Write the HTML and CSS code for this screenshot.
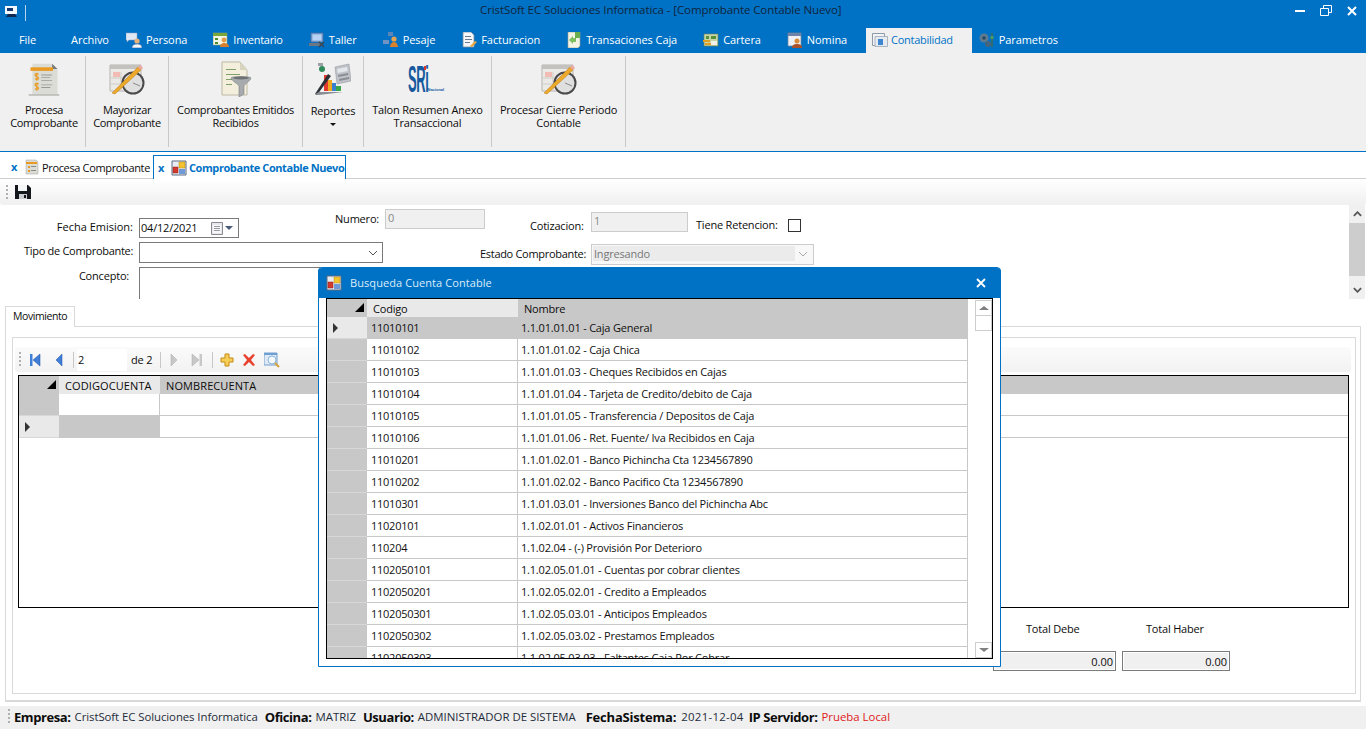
FILE: index.html
```html
<!DOCTYPE html>
<html lang="es">
<head>
<meta charset="utf-8">
<title>CristSoft EC Soluciones Informatica</title>
<link rel="stylesheet" href="styles.css">
</head>
<body>
<svg class="sprite" aria-hidden="true">
  <symbol id="i-app" viewBox="0 0 16 16"><path d="M2 2h12v8H2z" fill="#f4f8ff"/><path d="M4 4h6v3H4z" fill="#16366e"/><path d="M5 10h7l2 3H3z" fill="#12284f"/></symbol>
  <symbol id="i-persona" viewBox="0 0 16 16"><path d="M0 1h11v7H3L1 10V8H0z" fill="#dfe7f4" stroke="#8aa0c0" stroke-width=".5"/><circle cx="11" cy="9" r="2.600" fill="#e8b27c"/><path d="M6 16c0-3 2-4 5-4s5 1 5 4z" fill="#f4f6fa" stroke="#4c78b0" stroke-width=".7"/></symbol>
  <symbol id="i-inv" viewBox="0 0 16 16"><path d="M0 1h14v12H0z" fill="#f1f6e6" stroke="#8a9a70" stroke-width=".6"/><path d="M0 1h14v3H0z" fill="#7aa53a"/><path d="M2 6h3v2H2zM2 10h3v2H2z" fill="#4f8a2c"/><circle cx="11" cy="8" r="2.400" fill="#e59b45"/><path d="M7 15c0-3 2-4 4-4s5 1 5 4z" fill="#d97f2b"/></symbol>
  <symbol id="i-taller" viewBox="0 0 16 16"><path d="M2 1h12v9H2z" fill="#7fa5d8" stroke="#4a6a98" stroke-width=".7"/><path d="M3.500 2.500h9v6h-9z" fill="#b7d2f2"/><path d="M0 11h13v3H0z" fill="#6d7683"/><path d="M10 10l5 5M15 10l-5 5" stroke="#39424f" stroke-width="1.300"/></symbol>
  <symbol id="i-pesaje" viewBox="0 0 16 16"><path d="M5 0h5v4H5z" fill="#5d84b9"/><path d="M0 8h6v4H0z" fill="#6f94c4"/><circle cx="11" cy="7" r="2.600" fill="#e7a24f"/><path d="M7 15c0-3 2-5 4-5s4 2 4 5z" fill="#d9812c"/></symbol>
  <symbol id="i-fact" viewBox="0 0 16 16"><path d="M2 0h8l3 3v12H2z" fill="#f5f7fb" stroke="#7a8aa0" stroke-width=".8"/><path d="M4 4h6v1H4zM4 7h7v1H4zM4 10h5v1H4z" fill="#6a7a90"/><path d="M9 14l5-5 2 1-5 5z" fill="#e7a93c"/></symbol>
  <symbol id="i-caja" viewBox="0 0 16 16"><path d="M2 0h12v14l-2 2H2z" fill="#f3f4e6" stroke="#9aa08a" stroke-width=".6"/><path d="M9 0h5v6H9z" fill="#69b04c"/><path d="M3 8l4-4v2h3v4H7v2z" fill="#7ec060"/></symbol>
  <symbol id="i-cartera" viewBox="0 0 16 16"><path d="M1 2h14v12H1z" fill="#c6d6a8" stroke="#6f7f52" stroke-width=".6"/><path d="M3 4h3v3H3zM8 4h5v3H8z" fill="#5a8f3a"/><path d="M8 9h6v4H8z" fill="#f1f1ea"/><path d="M0 8h7v2H0zM2 11h6v2H2z" fill="#e2a023"/></symbol>
  <symbol id="i-nomina" viewBox="0 0 16 16"><path d="M1 1h13v13H1z" fill="#eef0f6" stroke="#7a8294" stroke-width=".7"/><path d="M1 1h13v3H1z" fill="#6f83a8"/><circle cx="10" cy="9" r="2.500" fill="#d98b3a"/><path d="M5 16c0-3 2-4 5-4s5 1 5 4z" fill="#a8512a"/></symbol>
  <symbol id="i-conta" viewBox="0 0 16 16"><path d="M.5 1.500h12v12H.5z" fill="#f2f4f7" stroke="#8f98a6"/><path d="M3 4.500h12.500v10H3z" fill="#e6ebf2" stroke="#9aa4b3" stroke-width=".8"/><path d="M6 7h5v6H6z" fill="#3f86d0"/></symbol>
  <symbol id="i-param" viewBox="0 0 16 16"><circle cx="5" cy="6" r="4.500" fill="#5f7b92"/><circle cx="5" cy="6" r="1.800" fill="#2d485e"/><circle cx="9" cy="12" r="3" fill="#46647c"/><path d="M13 1v14" stroke="#3f6c50" stroke-width="1.500"/><path d="M11.500 4h3v3h-3z" fill="#4d9a5e"/></symbol>
  <symbol id="r-proc" viewBox="0 0 40 40"><path d="M7 3h22l6 6v28H7z" fill="#dcdcd6"/><path d="M29 3l6 6h-6z" fill="#7a7a7a"/><path d="M3 37h34v1.500H3z" fill="#b0b0aa"/><path d="M5 7h25v4H5z" fill="#e99a22"/><path d="M14 15c-1-1.500-4-1.500-4 .5s4 1.500 4 3.500-3 2-4 .5M12 13v9M14 26c-1-1.500-4-1.500-4 .5s4 1.500 4 3.500-3 2-4 .5M12 24v9" fill="none" stroke="#e99a22" stroke-width="1.300"/><path d="M17 15h12v1H17zM17 18h10v1H17zM17 21h12v1H17zM17 26h12v1H17zM17 29h10v1H17z" fill="#9a9a94"/></symbol>
  <symbol id="r-cal" viewBox="0 0 36 32"><path d="M1 2h31v26H1z" fill="#eceae6" stroke="#b7b4b0"/><path d="M1 2h31v4H1z" fill="#c4c2bf"/><path d="M4 9h7v5H4z" fill="#f2bcb4"/><path d="M12 9v18M22 9v8M2 15h20M2 21h12" stroke="#cfccc8"/><circle cx="24" cy="20" r="10.500" fill="#dfdfdf" stroke="#4a4a4a" stroke-width="2"/><path d="M24 20l7 3" stroke="#8a8a8a"/><path d="M3 30L29 4l3 3L6 31z" fill="#eda92a" stroke="#bb7a14" stroke-width=".5"/><path d="M29 4l2-2 3 3-2 2z" fill="#f0a8a0"/></symbol>
  <symbol id="r-funnel" viewBox="0 0 32 36"><path d="M2 1h18l7 8v25H2z" fill="#f3efdc" stroke="#bdb9a3"/><path d="M20 1l7 8h-7z" fill="#d8d4c0"/><path d="M6 8h10v1H6zM6 13h14v1H6zM6 18h6v1H6zM6 23h6v1H6z" fill="#7fa06a"/><path d="M11 17c0-2 20-2 20 0 0 2-7 7-7 8v8l-5 3V25c0-1-8-6-8-8z" fill="#a7abad" stroke="#7e8284" stroke-width=".6"/><ellipse cx="21" cy="17" rx="8" ry="1.500" fill="#6e7274"/></symbol>
  <symbol id="r-rep" viewBox="0 0 36 32"><path d="M20 4l14-3 2 17-14 3z" fill="#bfc3c9" stroke="#8a8e94" stroke-width=".5"/><path d="M22 6l10-2 .7 4-10 2z" fill="#e3e6ea"/><path d="M23 12l10-2 .3 2-10 2zM24 16l10-2 .3 2-10 2z" fill="#8a8e94"/><path d="M9 12h4v16H9z" fill="#e23b2e"/><path d="M13 17h4v11h-4z" fill="#f0a91e"/><path d="M17 20h4v8h-4z" fill="#3b7fd0"/><path d="M21 23h5v5h-5z" fill="#3aa64c"/><path d="M0 31L13 11l3 2L2 32z" fill="#2b3036"/><path d="M0 31l4-2 24 0-24 3z" fill="#8a8e94"/><circle cx="7" cy="6" r="3" fill="#2f8a5a"/><path d="M3 0h5v3H3z" fill="#9aa0a6"/></symbol>
  <symbol id="i-tabdoc" viewBox="0 0 16 16"><path d="M2 1h10l2 2v12H2z" fill="#dcdcd6" stroke="#a0a09a" stroke-width=".5"/><path d="M2 3h11v2H2z" fill="#e99a22"/><path d="M4 7h2v2H4zM4 11h2v2H4z" fill="#e99a22"/><path d="M7 7h5v1H7zM7 11h5v1H7z" fill="#8a8a84"/></symbol>
  <symbol id="i-win" viewBox="0 0 16 16"><path d="M1 1h14v14H1z" fill="#e9edf3" stroke="#5b6a80"/><path d="M8 2h6v6H8z" fill="#f4c430" stroke="#b98a10" stroke-width=".5"/><path d="M2 7h5v6H2z" fill="#d43a2c" stroke="#8c1f16" stroke-width=".5"/><path d="M8 9h6v5H8z" fill="#6f9ad6"/></symbol>
  <symbol id="i-save" viewBox="0 0 16 16"><path d="M0 1h13l3 3v11H0z" fill="#14171c"/><path d="M3 1h9v6H3z" fill="#f4f6f8"/><path d="M4 10h8v5H4z" fill="#c9cdd2"/><path d="M9 11h2v3H9z" fill="#14171c"/></symbol>
  <symbol id="i-first" viewBox="0 0 12 14"><path d="M1 1h2.500v12H1z" fill="#3f7fd8"/><path d="M11 1v12L4 7z" fill="#3f7fd8" stroke="#1f4f9f" stroke-width=".5"/></symbol>
  <symbol id="i-prev" viewBox="0 0 8 14"><path d="M7 1v12L1 7z" fill="#3f7fd8" stroke="#1f4f9f" stroke-width=".5"/></symbol>
  <symbol id="i-next" viewBox="0 0 8 14"><path d="M1 1v12l6-6z" fill="#c8c8c8" stroke="#a8a8a8" stroke-width=".5"/></symbol>
  <symbol id="i-last" viewBox="0 0 12 14"><path d="M1 1v12l7-6z" fill="#c8c8c8" stroke="#a8a8a8" stroke-width=".5"/><path d="M8.500 1H11v12H8.500z" fill="#c8c8c8"/></symbol>
  <symbol id="i-add" viewBox="0 0 14 14"><path d="M5 1h4v4h4v4H9v4H5V9H1V5h4z" fill="#f7cf57" stroke="#c58a12"/></symbol>
  <symbol id="i-del" viewBox="0 0 14 14"><path d="M1 2l2-1 4 4 4-4 2 1-4 5 4 5-2 1-4-4-4 4-2-1 4-5z" fill="#e8412e"/></symbol>
  <symbol id="i-find" viewBox="0 0 16 16"><path d="M0 1h13v12H0z" fill="#dfeaf6" stroke="#6f9fd0"/><path d="M0 1h13v2H0z" fill="#6f9fd0"/><circle cx="8" cy="8" r="4" fill="#f4f9fe" stroke="#8ab4dc"/><path d="M11 11l4 4" stroke="#d8a03c" stroke-width="2"/></symbol>
  <symbol id="i-cal" viewBox="0 0 12 13"><path d="M.5.500h11v12H.5z" fill="#e8e8ec" stroke="#8a8a92"/><path d="M2 3h8v8H2z" fill="#f8f8fa"/><path d="M3 4h6v1H3zM3 6h6v1H3zM3 8h6v1H3z" fill="#9a9aa2"/></symbol>
</svg>

<header class="titlebar">
  <svg class="app-icon"><use href="#i-app"/></svg>
  <span class="qa-sep"></span>
  <span class="title">CristSoft EC Soluciones Informatica - [Comprobante Contable Nuevo]</span>
  <div class="winbtns">
    <svg class="wb w10" viewBox="0 0 10 10"><path d="M0 5h10" stroke="#fff" stroke-width="2"/></svg>
    <svg class="wb w12" viewBox="0 0 12 11"><path d="M3.500 3v-2.500h8v7h-3M.5 3.500h8v7h-8z" fill="none" stroke="#fff"/></svg>
    <svg class="wb w10" viewBox="0 0 10 10"><path d="M1 1l8 8M9 1l-8 8" stroke="#fff" stroke-width="2"/></svg>
  </div>
</header>

<nav class="menubar">
  <a class="menu-file">File</a>
  <a class="menu-plain">Archivo</a>
  <a class="menu-item"><svg class="ic16"><use href="#i-persona"/></svg>Persona</a>
  <a class="menu-item narrow"><svg class="ic16"><use href="#i-inv"/></svg>Inventario</a>
  <a class="menu-item"><svg class="ic16"><use href="#i-taller"/></svg>Taller</a>
  <a class="menu-item"><svg class="ic16"><use href="#i-pesaje"/></svg>Pesaje</a>
  <a class="menu-item"><svg class="ic16"><use href="#i-fact"/></svg>Facturacion</a>
  <a class="menu-item"><svg class="ic16"><use href="#i-caja"/></svg>Transaciones Caja</a>
  <a class="menu-item"><svg class="ic16"><use href="#i-cartera"/></svg>Cartera</a>
  <a class="menu-item"><svg class="ic16"><use href="#i-nomina"/></svg>Nomina</a>
  <a class="menu-item active narrow"><svg class="ic16"><use href="#i-conta"/></svg>Contabilidad</a>
  <a class="menu-item"><svg class="ic16"><use href="#i-param"/></svg>Parametros</a>
</nav>

<section class="ribbon">
  <div class="rgroup w85 tight"><svg class="ricon"><use href="#r-proc"/></svg><span>Procesa<br>Comprobante</span></div>
  <div class="rgroup w83 tight"><svg class="ricon"><use href="#r-cal"/></svg><span>Mayorizar<br>Comprobante</span></div>
  <div class="rgroup w134 tight"><svg class="ricon"><use href="#r-funnel"/></svg><span>Comprobantes Emitidos<br>Recibidos</span></div>
  <div class="rgroup w61"><svg class="ricon"><use href="#r-rep"/></svg><span class="rep">Reportes<i class="caret"></i></span></div>
  <div class="rgroup w128"><div class="sri"><b>SRi</b><i class="sri-red"></i><small>Nacional</small></div><span>Talon Resumen Anexo<br>Transaccional</span></div>
  <div class="rgroup w134"><svg class="ricon"><use href="#r-cal"/></svg><span>Procesar Cierre Periodo<br>Contable</span></div>
</section>

<div class="doctabs">
  <div class="doctab"><span class="x">x</span><svg class="ic16"><use href="#i-tabdoc"/></svg><span class="tab-text">Procesa Comprobante</span></div>
  <div class="doctab current"><span class="x">x</span><svg class="ic16"><use href="#i-win"/></svg>Comprobante Contable Nuevo</div>
</div>

<div class="savebar"><span class="grip"></span><svg class="ic16"><use href="#i-save"/></svg></div>

<section class="formwrap">
  <form class="form">
    <div class="frow r1">
      <label class="lab-a t13">Fecha Emision:</label>
      <div class="field date">04/12/2021<span class="datebtn"><svg class="calic"><use href="#i-cal"/></svg><i class="caret blue"></i></span></div>
      <label class="lab-num">Numero:</label>
      <div class="ro num">0</div>
      <label class="lab-cot">Cotizacion:</label>
      <div class="ro cot">1</div>
      <label class="lab-ret">Tiene Retencion:</label>
      <span class="check"></span>
    </div>
    <div class="frow r2">
      <label class="lab-a tipo-lab">Tipo de Comprobante:</label>
      <div class="field tipo"><svg class="chev" viewBox="0 0 10 6"><path d="M1 1l4 4 4-4" fill="none" stroke="#555"/></svg></div>
      <label class="lab-est">Estado Comprobante:</label>
      <div class="estado"><span>Ingresando</span><svg class="chev" viewBox="0 0 10 6"><path d="M1 1l4 4 4-4" fill="none" stroke="#aaa"/></svg></div>
    </div>
    <div class="frow r3">
      <label class="lab-a con">Concepto:</label>
      <div class="field concept"></div>
    </div>
  </form>
  <div class="vscroll">
    <svg class="sb-arrow" viewBox="0 0 10 6"><path d="M1 5l4-4 4 4" fill="none" stroke="#555" stroke-width="2"/></svg>
    <span class="sb-thumb"></span>
    <svg class="sb-arrow" viewBox="0 0 10 6"><path d="M1 1l4 4 4-4" fill="none" stroke="#555" stroke-width="2"/></svg>
  </div>
</section>

<section class="tabarea">
  <div class="tab-mov">Movimiento</div>
  <div class="panel">
    <div class="inner">
      <div class="navbar">
        <span class="grip"></span>
        <svg class="n12"><use href="#i-first"/></svg>
        <svg class="n8"><use href="#i-prev"/></svg>
        <span class="nsep"></span>
        <span class="pos">2</span>
        <span class="de">de 2</span>
        <span class="nsep"></span>
        <svg class="n8 next"><use href="#i-next"/></svg>
        <svg class="n12 last"><use href="#i-last"/></svg>
        <span class="nsep"></span>
        <svg class="n14"><use href="#i-add"/></svg>
        <svg class="n14"><use href="#i-del"/></svg>
        <svg class="n14 find"><use href="#i-find"/></svg>
      </div>
      <div class="grid main">
        <div class="g-row g-head">
          <div class="rh corner"><i class="tri"></i></div>
          <div class="gc c-cod hl">CODIGOCUENTA</div>
          <div class="gc c-nom">NOMBRECUENTA</div>
        </div>
        <div class="g-row body1"><div class="rh"></div><div class="gc c-cod"></div><div class="gc c-nom grow"></div></div>
        <div class="g-row body1"><div class="rh hl"><i class="arrow"></i></div><div class="gc c-cod sel"></div><div class="gc c-nom grow"></div></div>
      </div>
      <div class="totals">
        <div class="tot-labels"><span class="tl1">Total Debe</span><span class="tl2">Total Haber</span></div>
        <div class="tot-boxes"><div class="tbox b1">0.00</div><div class="tbox b2">0.00</div></div>
      </div>
    </div>
  </div>
</section>

<footer class="status">
  <span class="grip"></span>
  <b>Empresa:</b><span class="s-emp">CristSoft EC Soluciones Informatica</span>
  <b>Oficina:</b><span>MATRIZ</span>
  <b>Usuario:</b><span class="s-adm">ADMINISTRADOR DE SISTEMA</span>
  <b class="s-fecha">FechaSistema:</b><span class="s-date">2021-12-04</span>
  <b>IP Servidor:</b><span class="red">Prueba Local</span>
</footer>

<div class="dialog">
  <div class="dlg-title"><svg class="ic16"><use href="#i-win"/></svg><span>Busqueda Cuenta Contable</span><svg class="dlg-x" viewBox="0 0 10 10"><path d="M1 1l8 8M9 1l-8 8" stroke="#fff" stroke-width="1.800"/></svg></div>
  <div class="dlg-body">
    <div class="grid dlg">
      <div class="g-row g-head">
        <div class="rh corner"><i class="tri"></i></div>
        <div class="gc d-cod hl">Codigo</div>
        <div class="gc d-nom">Nombre</div>
      </div>
      <div class="g-row drow first"><div class="rh hl"><i class="arrow"></i></div><div class="gc d-cod">11010101</div><div class="gc d-nom">1.1.01.01.01 - Caja General</div></div>
      <div class="g-row drow"><div class="rh"></div><div class="gc d-cod">11010102</div><div class="gc d-nom">1.1.01.01.02 - Caja Chica</div></div>
      <div class="g-row drow"><div class="rh"></div><div class="gc d-cod">11010103</div><div class="gc d-nom">1.1.01.01.03 - Cheques Recibidos en Cajas</div></div>
      <div class="g-row drow"><div class="rh"></div><div class="gc d-cod">11010104</div><div class="gc d-nom">1.1.01.01.04 - Tarjeta de Credito/debito de Caja</div></div>
      <div class="g-row drow"><div class="rh"></div><div class="gc d-cod">11010105</div><div class="gc d-nom">1.1.01.01.05 - Transferencia / Depositos de Caja</div></div>
      <div class="g-row drow"><div class="rh"></div><div class="gc d-cod">11010106</div><div class="gc d-nom">1.1.01.01.06 - Ret. Fuente/ Iva Recibidos en Caja</div></div>
      <div class="g-row drow"><div class="rh"></div><div class="gc d-cod">11010201</div><div class="gc d-nom">1.1.01.02.01 - Banco Pichincha Cta 1234567890</div></div>
      <div class="g-row drow"><div class="rh"></div><div class="gc d-cod">11010202</div><div class="gc d-nom">1.1.01.02.02 - Banco Pacifico Cta 1234567890</div></div>
      <div class="g-row drow"><div class="rh"></div><div class="gc d-cod">11010301</div><div class="gc d-nom">1.1.01.03.01 - Inversiones Banco del Pichincha Abc</div></div>
      <div class="g-row drow"><div class="rh"></div><div class="gc d-cod">11020101</div><div class="gc d-nom">1.1.02.01.01 - Activos Financieros</div></div>
      <div class="g-row drow"><div class="rh"></div><div class="gc d-cod">110204</div><div class="gc d-nom">1.1.02.04 - (-) Provisión Por Deterioro</div></div>
      <div class="g-row drow"><div class="rh"></div><div class="gc d-cod">1102050101</div><div class="gc d-nom">1.1.02.05.01.01 - Cuentas por cobrar clientes</div></div>
      <div class="g-row drow"><div class="rh"></div><div class="gc d-cod">1102050201</div><div class="gc d-nom">1.1.02.05.02.01 - Credito a Empleados</div></div>
      <div class="g-row drow"><div class="rh"></div><div class="gc d-cod">1102050301</div><div class="gc d-nom">1.1.02.05.03.01 - Anticipos Empleados</div></div>
      <div class="g-row drow"><div class="rh"></div><div class="gc d-cod">1102050302</div><div class="gc d-nom">1.1.02.05.03.02 - Prestamos Empleados</div></div>
      <div class="g-row drow"><div class="rh"></div><div class="gc d-cod">1102050303</div><div class="gc d-nom">1.1.02.05.03.03 - Faltantes Caja Por Cobrar</div></div>
      <div class="dlg-scroll">
        <span class="ds-btn"><i class="ds-up"></i></span>
        <span class="ds-thumb"></span>
        <span class="ds-space"></span>
        <span class="ds-btn"><i class="ds-down"></i></span>
      </div>
    </div>
  </div>
</div>
</body>
</html>
```

FILE: styles.css
```css
* { box-sizing: border-box; }
html, body { margin: 0; padding: 0; }
body {
  width: 1366px; height: 729px; overflow: hidden; position: relative;
  background: #fff; color: #0c0c0c;
  font: 11px/16px "Open Sans", "Noto Sans", sans-serif;
  letter-spacing: -.2px;
}
.sprite { width: 0; height: 0; position: absolute; }
.ic16 { width: 16px; height: 16px; flex: none; }

/* title bar */
.titlebar { height: 28px; background: #0072c6; color: #10243a; display: flex; align-items: center; }
.app-icon { width: 16px; height: 16px; margin: 0 0 4px 3px; flex: none; }
.qa-sep { width: 1px; height: 16px; background: #b8d4ec; margin: 0 0 2px 6px; flex: none; }
.title { margin: 0 0 8px 454px; white-space: nowrap; font-size: 11.500px; letter-spacing: -.1px; }
.winbtns { margin: 0 9px 7px auto; display: flex; gap: 15px; align-items: center; }
.wb { display: block; height: 10px; }
.w10 { width: 10px; }
.w12 { width: 12px; height: 11px; }

/* menu */
.menubar { height: 25px; background: #0072c6; display: flex; color: #fff; letter-spacing: -.08px; }
.menubar a { display: flex; align-items: center; gap: 4px; white-space: nowrap; padding-bottom: 2px; }
.menu-file { padding: 0 35px 0 19px; }
.menu-plain { padding-right: 4px; }
.menu-item { padding: 0 13px; }
.menubar .narrow { letter-spacing: -.28px; }
.menubar .menu-item.active { background: #f0f0f0; color: #0072c6; padding: 0 19px 2px 6px; margin-left: 6px; gap: 3px; }
.menu-item.active + .menu-item { padding-left: 7px; }

/* ribbon */
.ribbon { height: 99px; background: #f0f0f0; border-bottom: 1px solid #0072c6; display: flex; padding-top: 3px; align-items: flex-start; }
.rgroup { height: 91px; border-right: 1px solid #c8c8c8; display: flex; flex-direction: column; align-items: center; text-align: center; line-height: 13px; white-space: nowrap; padding-top: 5px; }
.rgroup span { display: block; margin-top: 6px; }
.rgroup.tight { letter-spacing: -.33px; }
.ricon { width: 36px; height: 36px; }
.w85 { width: 86px; padding-left: 3px; } .w83 { width: 83px; } .w134 { width: 134px; } .w61 { width: 61px; } .w128 { width: 128px; }
.rep { padding-top: 1px; }
.caret { display: block; width: 0; height: 0; border: 3px solid transparent; border-top: 3px solid #111; border-bottom: 0; margin: 6px auto 0; }
.sri { height: 36px; width: 42px; position: relative; text-align: left; margin-left: 2px; }
.sri b { display: block; height: 36px; width: 58px; font: 700 37px/38px "Liberation Sans", sans-serif; color: #16599f; letter-spacing: -1px; transform: scaleX(.35); transform-origin: 0 0; margin-left: 0; }
.sri-red { position: absolute; left: 16px; top: 5px; width: 2px; height: 4px; background: #d8362a; }
.sri small { position: absolute; left: 20px; bottom: 5px; font: 700 4px/5px "Liberation Sans", sans-serif; color: #16599f; letter-spacing: 0; }

/* doc tabs */
.doctabs { height: 27px; display: flex; align-items: flex-end; border-bottom: 1px solid #cfcfcf; padding-left: 9px; }
.doctab { height: 23px; width: 144px; display: flex; align-items: center; white-space: nowrap; letter-spacing: -.35px; }
.doctab .x { color: #0072c6; width: 13px; font-weight: 700; margin-left: 2px; }
.doctab .ic16 { margin-right: 2px; }
.tab-text { padding-top: 2px; }
.doctab.current { width: 193px; height: 24px; margin-bottom: -1px; padding-left: 2px; background: #fff; border: 1px solid #0072c6; border-bottom: 0; color: #0072c6; font-weight: 700; letter-spacing: -.42px; }

/* save bar */
.savebar { height: 26px; background: linear-gradient(#fff, #f0f0f0); border-radius: 0 0 3px 3px; display: flex; align-items: center; padding-left: 6px; gap: 7px; }
.grip { display: block; width: 2px; height: 15px; background: repeating-linear-gradient(#b0b0b0 0 2px, transparent 2px 4px); flex: none; }

/* form */
.formwrap { height: 94px; display: flex; }
.form { flex: 1; overflow: hidden; }
.frow { display: flex; align-items: flex-start; }
.frow label { white-space: nowrap; }
.r1 { height: 37px; }
.r2 { height: 25px; }
.lab-a { width: 134px; text-align: right; padding-right: 1px; margin-top: 1px; }
.lab-a.t13 { margin-top: 14px; letter-spacing: 0; }
.lab-a.tipo-lab { letter-spacing: -.3px; }
.field { margin-left: 5px; border: 1px solid #7a7a7a; background: #fff; display: flex; align-items: center; }
.date { width: 100px; height: 20px; margin-top: 13px; padding-left: 1px; }
.datebtn { margin-left: auto; display: flex; align-items: center; gap: 2px; padding-right: 5px; }
.calic { width: 12px; height: 13px; }
.caret.blue { border-top-color: #4a5a78; border-width: 4px; border-bottom: 0; margin: 0; }
.lab-num { margin: 6px 0 0 96px; width: 50px; }
.ro { background: #f0f0f0; border: 1px solid #ccc; color: #8a8a8a; padding-left: 2px; height: 20px; }
.num { width: 100px; margin-top: 4px; }
.lab-cot { margin: 13px 0 0 45px; width: 61px; }
.cot { width: 97px; margin-top: 7px; }
.lab-ret { margin: 12px 0 0 8px; width: 92px; }
.check { width: 13px; height: 13px; border: 1px solid #333; background: #fff; margin-top: 14px; }
.tipo { width: 244px; height: 21px; }
.chev { width: 10px; height: 6px; margin: 0 4px 0 auto; }
.lab-est { margin: 4px 0 0 97px; width: 106px; letter-spacing: -.3px; }
.estado { margin: 2px 0 0 5px; width: 223px; height: 21px; border: 1px solid #ccc; background: #f8f8f8; color: #777; display: flex; align-items: center; padding: 0 0 2px 1px; }
.estado span { width: 202px; background: #ebebeb; padding-left: 1px; height: 15px; line-height: 15px; }
.estado .chev { margin-right: 5px; }
.con { width: 129px; padding-right: 0; }
.concept { margin-left: 10px; width: 400px; height: 60px; }
.vscroll { width: 16px; margin-right: 1px; background: #f0f0f0; display: flex; flex-direction: column; align-items: center; height: 94px; }
.sb-arrow { width: 9px; height: 6px; margin: 6px 0; flex: none; }
.sb-thumb { width: 100%; height: 53px; background: #cdcdcd; margin-bottom: 5px; }

/* tab area */
.tabarea { height: 407px; padding: 7px 5px 0; }
.tab-mov { width: 70px; height: 21px; border: 1px solid #d9d9d9; border-bottom: 0; padding: 1px 0 0 7px; background: #fff; position: relative; z-index: 1; margin-bottom: -1px; font-size: 10.500px; letter-spacing: -.42px; }
.panel { width: 1356px; height: 376px; border: 1px solid #d9d9d9; border-bottom-width: 2px; padding: 10px 4px 8px 6px; }
.inner { height: 357px; border: 1px solid #d9d9d9; padding: 9px 2px 0 2px; }
.navbar { height: 25px; background: linear-gradient(#fbfbfb, #f2f2f2); display: flex; align-items: center; padding-left: 4px; border-radius: 3px; margin-right: 2px; }
.n12 { width: 12px; height: 14px; margin-left: 8px; flex: none; }
.n8 { width: 8px; height: 14px; margin-left: 14px; flex: none; }
.nsep { width: 1px; height: 16px; background: #c8c8c8; margin-left: 10px; flex: none; }
.pos { width: 50px; height: 22px; background: #fff; padding: 3px 0 0 1px; margin-left: 3px; }
.de { margin-left: 4px; width: 22px; white-space: nowrap; }
.de + .nsep { margin-left: 7px; }
.nsep + .n8.next { margin-left: 9px; }
.n12.last { margin-left: 13px; }
.last + .nsep { margin-left: 9px; }
.n14 { width: 14px; height: 14px; margin-left: 7px; flex: none; }
.n14 + .n14 { margin-left: 8px; }
.n14.find { width: 16px; height: 16px; margin-left: 8px; }

/* grids */
.grid { border: 1px solid #000; background: #fff; overflow: hidden; position: relative; }
.grid.main { height: 233px; width: 1331px; margin: 3px 0 0 3px; }
.main .g-head { letter-spacing: .1px; }
.g-row { display: flex; }
.g-head { height: 18px; background: #c8c8c8; line-height: 18px; }
.rh { width: 40px; flex: none; background: #c8c8c8; position: relative; border-bottom: 1px solid #d8d8d8; }
.rh.hl, .gc.hl { background: #e9e9e9; }
.corner { border-bottom: 0; }
.tri { position: absolute; right: 3px; bottom: 5px; width: 0; height: 0; border-left: 9px solid transparent; border-bottom: 9px solid #000; }
.arrow { position: absolute; left: 6px; top: 6px; width: 0; height: 0; border-left: 5px solid #333; border-top: 5px solid transparent; border-bottom: 5px solid transparent; }
.gc { border-right: 1px solid #c8c8c8; padding-left: 6px; white-space: nowrap; flex: none; }
.g-head .gc { border-right: 0; line-height: 20px; }
.c-cod { width: 101px; }
.c-nom { width: 300px; }
.c-nom.grow { flex: 1; border-right: 0; border-bottom: 1px solid #c8c8c8; }
.body1 { height: 22px; }
.body1 .gc { border-bottom: 1px solid #c8c8c8; }
.gc.sel { background: #c8c8c8; }

.totals { padding-top: 13px; }
.tot-labels { display: flex; padding-left: 1011px; height: 16px; }
.tl1 { width: 120px; }
.tot-boxes { display: flex; gap: 6px; padding: 14px 0 0 978px; }
.tbox { height: 20px; background: #f0f0f0; border: 1px solid #7a7a7a; box-shadow: inset 0 0 0 1px #fff; text-align: right; padding: 2px 2px 0 0; letter-spacing: 0; }
.b1 { width: 123px; } .b2 { width: 108px; }

/* status */
.status { height: 23px; background: #f0f0f0; display: flex; align-items: center; white-space: nowrap; padding: 0 0 2px 8px; color: #1e2c3a; font-size: 11.400px; letter-spacing: 0; }
.status .grip { margin-right: 4px; height: 16px; }
.status b { color: #0c0c0c; font-size: 13px; letter-spacing: -.42px; margin-right: 4px; }
.status span { margin-right: 7px; }
.status .s-emp { letter-spacing: -.07px; }
.status .s-adm { margin-right: 10px; }
.status b.s-fecha { letter-spacing: -.2px; margin-right: 5px; }
.status .s-date { letter-spacing: .3px; margin-right: 5px; }
.status .red { color: #e02020; }

/* dialog */
.dialog { position: absolute; left: 318px; top: 267px; width: 683px; height: 400px; border: 1px solid #0072c6; border-radius: 4px 4px 0 0; background: #fff; }
.dlg-title { height: 30px; background: #0072c6; color: #dcecf8; display: flex; align-items: center; padding-left: 8px; gap: 8px; margin: 0 -1px; border-radius: 4px 4px 0 0; letter-spacing: .08px; }
.dlg-x { width: 10px; height: 10px; margin: 0 15px 0 auto; }
.dlg-body { padding: 0 8px 7px 7px; }
.grid.dlg { height: 361px; width: 667px; letter-spacing: -.2px; }
.d-cod { width: 151px; }
.d-nom { width: 450px; }
.drow { height: 22px; line-height: 21px; }
.drow .gc { border-bottom: 1px solid #c8c8c8; color: #111; }
.drow .d-cod { padding-left: 4px; letter-spacing: -.25px; }
.drow .d-nom { padding-left: 3px; }
.dlg .g-head { width: 641px; }
.drow.first .gc { background: #c8c8c8; border-right-color: #c8c8c8; }
.dlg-scroll { position: absolute; right: 0; top: 1px; bottom: 0; width: 17px; display: flex; flex-direction: column; background: #fff; }
.ds-btn { height: 16px; border: 1px solid #cdcdcd; display: flex; align-items: center; justify-content: center; flex: none; }
.ds-thumb { height: 15px; border: 1px solid #cdcdcd; border-top: 0; flex: none; }
.ds-space { flex: 1; }
.ds-up { width: 0; height: 0; border: 5px solid transparent; border-bottom: 4px solid #808080; border-top: 0; }
.ds-down { width: 0; height: 0; border: 5px solid transparent; border-top: 4px solid #808080; border-bottom: 0; }
```
